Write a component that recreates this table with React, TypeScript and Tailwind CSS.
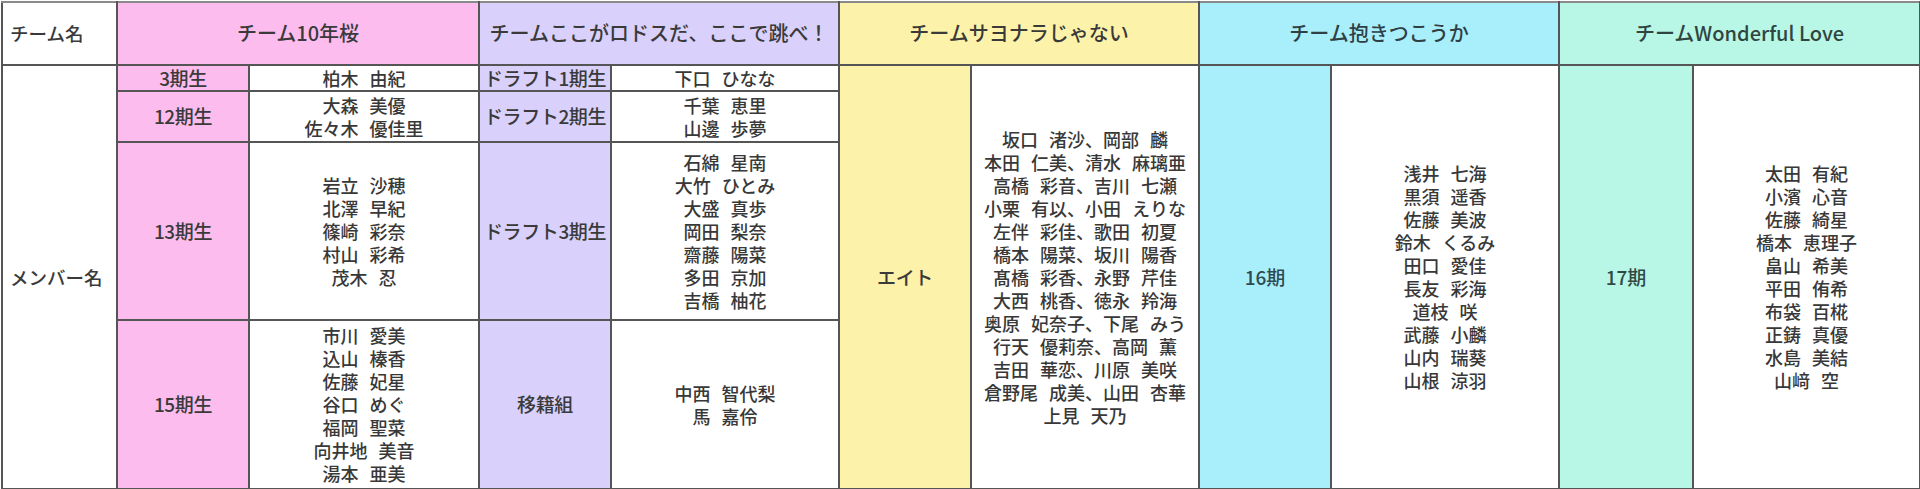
const FONT = "font-['Noto_Sans_CJK_JP','Noto_Sans',sans-serif]";

const cell = "border-2 border-[#555] p-0 text-center align-middle leading-[20px]";

function Names({ names }: { names: string[] }) {
  return (
    <div className="text-[18px] leading-[23px] font-medium text-[#383838] whitespace-nowrap [word-spacing:7px]">
      {names.map((n) => (
        <div key={n}>{n}</div>
      ))}
    </div>
  );
}

function Label({ children }: { children: React.ReactNode }) {
  return (
    <span className="text-[19px] leading-[20px] font-medium text-[#3a3a3a] whitespace-nowrap tracking-[-0.02em]">
      {children}
    </span>
  );
}

const pink = [
  { label: "3期生", names: ["柏木 由紀"] },
  { label: "12期生", names: ["大森 美優", "佐々木 優佳里"] },
  { label: "13期生", names: ["岩立 沙穂", "北澤 早紀", "篠崎 彩奈", "村山 彩希", "茂木 忍"] },
  {
    label: "15期生",
    names: ["市川 愛美", "込山 榛香", "佐藤 妃星", "谷口 めぐ", "福岡 聖菜", "向井地 美音", "湯本 亜美"],
  },
];

const purple = [
  { label: "ドラフト1期生", names: ["下口 ひなな"] },
  { label: "ドラフト2期生", names: ["千葉 恵里", "山邊 歩夢"] },
  {
    label: "ドラフト3期生",
    names: ["石綿 星南", "大竹 ひとみ", "大盛 真歩", "岡田 梨奈", "齋藤 陽菜", "多田 京加", "吉橋 柚花"],
  },
  { label: "移籍組", names: ["中西 智代梨", "馬 嘉伶"] },
];

const eight = [
  "坂口 渚沙、岡部 麟",
  "本田 仁美、清水 麻璃亜",
  "高橋 彩音、吉川 七瀬",
  "小栗 有以、小田 えりな",
  "左伴 彩佳、歌田 初夏",
  "橋本 陽菜、坂川 陽香",
  "髙橋 彩香、永野 芹佳",
  "大西 桃香、徳永 羚海",
  "奥原 妃奈子、下尾 みう",
  "行天 優莉奈、高岡 薫",
  "吉田 華恋、川原 美咲",
  "倉野尾 成美、山田 杏華",
  "上見 天乃",
];

const gen16 = [
  "浅井 七海",
  "黒須 遥香",
  "佐藤 美波",
  "鈴木 くるみ",
  "田口 愛佳",
  "長友 彩海",
  "道枝 咲",
  "武藤 小麟",
  "山内 瑞葵",
  "山根 涼羽",
];

const gen17 = [
  "太田 有紀",
  "小濱 心音",
  "佐藤 綺星",
  "橋本 恵理子",
  "畠山 希美",
  "平田 侑希",
  "布袋 百椛",
  "正鋳 真優",
  "水島 美結",
  "山﨑 空",
];

const rowHeights = ["h-[26px]", "h-[51px]", "h-[178px]", "h-[169px]"];

export default function App() {
  return (
    <div className={`w-[1920px] h-[489px] p-[1px] bg-white overflow-hidden ${FONT}`}>
      <table className="table-fixed border-collapse w-[1918px] h-[487px]">
        <colgroup>
          <col className="w-[115px]" />
          <col className="w-[132px]" />
          <col className="w-[230px]" />
          <col className="w-[132px]" />
          <col className="w-[228px]" />
          <col className="w-[132px]" />
          <col className="w-[228px]" />
          <col className="w-[132px]" />
          <col className="w-[228px]" />
          <col className="w-[134px]" />
          <col className="w-[227px]" />
        </colgroup>
        <tbody>
          {/* team names */}
          <tr className="h-[63px]">
            <td className={`${cell} bg-white text-left pl-[7px] border-t-[#8a8a8a]`}>
              <span className="text-[18.5px] font-medium text-[#3a3a3a]">チーム名</span>
            </td>
            <td colSpan={2} className={`${cell} bg-[#fcbdee] border-t-[#8a8a8a]`}>
              <span className="text-[20px] font-medium text-[#3a3a3a]">チーム10年桜</span>
            </td>
            <td colSpan={2} className={`${cell} bg-[#d9d1fb] border-t-[#8a8a8a]`}>
              <span className="text-[20px] font-medium text-[#3a3a3a] whitespace-nowrap">
                チームここがロドスだ、ここで跳べ！
              </span>
            </td>
            <td colSpan={2} className={`${cell} bg-[#fdf2a9] border-t-[#8a8a8a]`}>
              <span className="text-[20px] font-medium text-[#3a3a3a]">チームサヨナラじゃない</span>
            </td>
            <td colSpan={2} className={`${cell} bg-[#a9eefb] border-t-[#8a8a8a]`}>
              <span className="text-[20px] font-medium text-[#2f3f44]">チーム抱きつこうか</span>
            </td>
            <td colSpan={2} className={`${cell} bg-[#b8f6e6] border-t-[#8a8a8a]`}>
              <span className="text-[20px] font-medium text-[#2f4540]">チームWonderful Love</span>
            </td>
          </tr>

          {pink.map((p, i) => (
            <tr key={p.label} className={rowHeights[i]}>
              {i === 0 && (
                <td rowSpan={4} className={`${cell} bg-white text-left pl-[7px]`}>
                  <span className="text-[18.5px] font-medium text-[#3a3a3a]">メンバー名</span>
                </td>
              )}
              <td className={`${cell} bg-[#fcbdee]`}>
                <Label>{p.label}</Label>
              </td>
              <td className={`${cell} bg-white`}>
                <Names names={p.names} />
              </td>
              <td className={`${cell} bg-[#d9d1fb]`}>
                <Label>{purple[i].label}</Label>
              </td>
              <td className={`${cell} bg-white`}>
                <Names names={purple[i].names} />
              </td>
              {i === 0 && (
                <>
                  <td rowSpan={4} className={`${cell} bg-[#fdf2a9]`}>
                    <Label>エイト</Label>
                  </td>
                  <td rowSpan={4} className={`${cell} bg-white`}>
                    <Names names={eight} />
                  </td>
                  <td rowSpan={4} className={`${cell} bg-[#a9eefb]`}>
                    <span className="text-[19px] font-medium text-[#2f4a52]">16期</span>
                  </td>
                  <td rowSpan={4} className={`${cell} bg-white`}>
                    <Names names={gen16} />
                  </td>
                  <td rowSpan={4} className={`${cell} bg-[#b8f6e6]`}>
                    <span className="text-[19px] font-medium text-[#2f4a45]">17期</span>
                  </td>
                  <td rowSpan={4} className={`${cell} bg-white`}>
                    <Names names={gen17} />
                  </td>
                </>
              )}
            </tr>
          ))}
        </tbody>
      </table>
    </div>
  );
}
